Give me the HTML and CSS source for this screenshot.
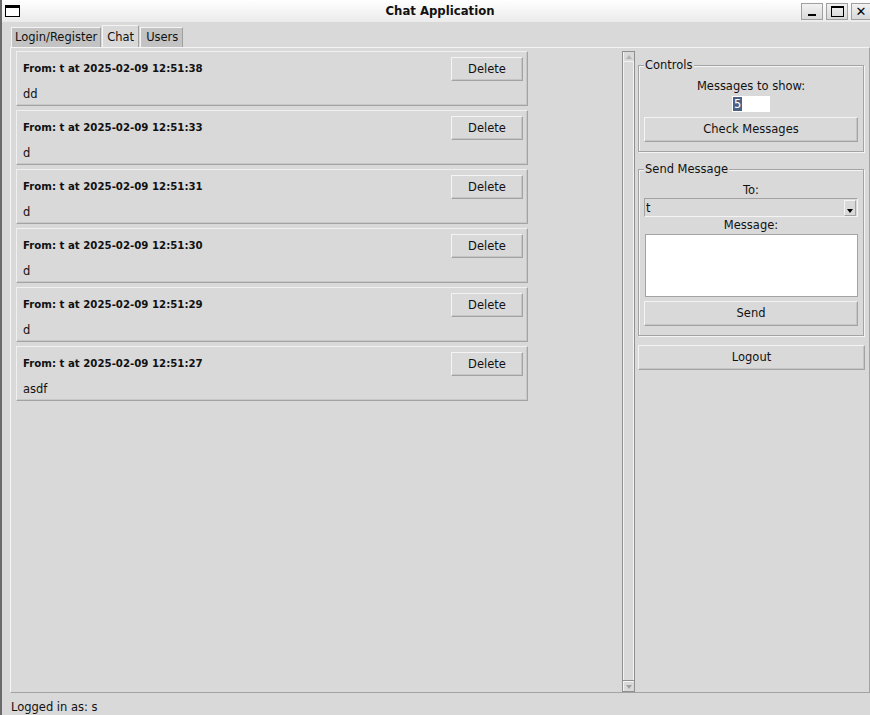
FILE: index.html
```html
<!DOCTYPE html>
<html>
<head>
<meta charset="utf-8">
<link rel="stylesheet" href="styles.css">
</head>
<body>
<div class="window">
  <div class="titlebar">
    <div class="winicon"></div>
    <div class="title">Chat Application</div>
    <div class="wbtns">
      <div class="wbtn"><span class="minbar"></span></div>
      <div class="wbtn"><span class="maxbox"></span></div>
      <div class="wbtn close">✕</div>
    </div>
  </div>
  <div class="tabs">
    <div class="tab">Login/Register</div>
    <div class="tab active">Chat</div>
    <div class="tab">Users</div>
  </div>
  <div class="notebook">
    <div class="canvas">
      <div class="msg"><div class="msg-main"><div class="msg-head">From: t at 2025-02-09 12:51:38</div><div class="msg-body">dd</div></div><div class="btn del">Delete</div></div>
      <div class="msg"><div class="msg-main"><div class="msg-head">From: t at 2025-02-09 12:51:33</div><div class="msg-body">d</div></div><div class="btn del">Delete</div></div>
      <div class="msg"><div class="msg-main"><div class="msg-head">From: t at 2025-02-09 12:51:31</div><div class="msg-body">d</div></div><div class="btn del">Delete</div></div>
      <div class="msg"><div class="msg-main"><div class="msg-head">From: t at 2025-02-09 12:51:30</div><div class="msg-body">d</div></div><div class="btn del">Delete</div></div>
      <div class="msg"><div class="msg-main"><div class="msg-head">From: t at 2025-02-09 12:51:29</div><div class="msg-body">d</div></div><div class="btn del">Delete</div></div>
      <div class="msg"><div class="msg-main"><div class="msg-head">From: t at 2025-02-09 12:51:27</div><div class="msg-body">asdf</div></div><div class="btn del">Delete</div></div>
    </div>
    <div class="scrollbar">
      <div class="arrow up"></div>
      <div class="trough"></div>
      <div class="arrow down"></div>
    </div>
    <div class="side">
      <div class="lframe controls">
        <div class="legend">Controls</div>
        <div class="lbl">Messages to show:</div>
        <div class="entry"><span class="sel">5</span></div>
        <div class="btn wide">Check Messages</div>
      </div>
      <div class="lframe sendframe">
        <div class="legend">Send Message</div>
        <div class="lbl">To:</div>
        <div class="combo"><span>t</span><span class="combo-arrow"></span></div>
        <div class="lbl">Message:</div>
        <div class="textarea"></div>
        <div class="btn wide">Send</div>
      </div>
      <div class="btn logout">Logout</div>
    </div>
  </div>
  <div class="status">Logged in as: s</div>
</div>
</body>
</html>
```

FILE: styles.css
```css
* { box-sizing: border-box; }
html, body { margin: 0; padding: 0; }
body {
  width: 870px;
  height: 715px;
  overflow: hidden;
  background: #d9d9d9;
  font-family: "DejaVu Sans", sans-serif;
  font-size: 11.5px;
  color: #111;
}
.window {
  height: 715px;
  display: flex;
  flex-direction: column;
  border-left: 2px solid #6a6a6a;
}
.titlebar {
  height: 22px;
  display: flex;
  align-items: center;
  background: linear-gradient(#ffffff, #ebebeb);
  position: relative;
}
.winicon {
  width: 15px;
  height: 12px;
  margin-left: 3px;
  border: 1px solid #000;
  border-top-width: 3px;
  background: #fff;
}
.title {
  position: absolute;
  left: 0;
  right: 0;
  top: 0;
  line-height: 22px;
  text-align: center;
  font-weight: bold;
  font-size: 11.7px;
  padding-left: 8px;
}
.wbtns { display: flex; gap: 3px; margin-left: auto; margin-right: -1px; }
.wbtn {
  width: 22px;
  height: 17px;
  border: 1px solid #a0a0a0;
  background: linear-gradient(#f2f2f2, #d8d8d8);
  display: flex;
  align-items: center;
  justify-content: center;
  font-size: 12px;
  font-weight: bold;
  line-height: 1;
  color: #000;
}
.wbtn.close { width: 20px; font-size: 13px; }
.minbar { width: 8px; height: 2px; background: #000; margin-top: 7px; }
.maxbox { width: 13px; height: 11px; border: 1px solid #000; border-top-width: 2px; }
.tabs {
  display: flex;
  align-items: flex-end;
  height: 25px;
  padding-left: 9px;
}
.tab {
  height: 20px;
  padding: 0 3px;
  line-height: 19px;
  background: #c3c3c3;
  border: 1px solid #a0a0a0;
  border-bottom: none;
  border-top-color: #f4f4f4;
  border-left-color: #f4f4f4;
  margin-right: 1px;
}
.tab:last-child { padding: 0 4px 0 5px; }
.tab.active {
  height: 22px;
  background: #d9d9d9;
  padding: 2px 4px 0 4px;
}
.notebook {
  flex: 1;
  margin-left: 8px;
  display: flex;
  border-top: 1px solid #f4f4f4;
  border-left: 1px solid #f4f4f4;
  border-bottom: 1px solid #a3a3a3;
  border-right: 1px solid #a3a3a3;
  padding: 3px 3px 0 5px;
}
.canvas {
  flex: 1;
  display: flex;
  flex-direction: column;
  gap: 4px;
}
.msg {
  width: 512px;
  height: 55px;
  display: flex;
  justify-content: space-between;
  border: 1px solid #a3a3a3;
  border-top-color: #f0f0f0;
  border-left-color: #f0f0f0;
  box-shadow: inset -1px -1px 0 #c8c8c8;
  padding: 5px 4px 0 6px;
}
.msg-head {
  font-weight: bold;
  font-size: 10.2px;
  line-height: 24px;
}
.msg-body {
  line-height: 26px;
}
.btn {
  border: 1px solid #a3a3a3;
  border-top-color: #f4f4f4;
  border-left-color: #f4f4f4;
  box-shadow: inset -1px -1px 0 #c5c5c5;
  text-align: center;
  line-height: 22px;
  height: 24px;
}
.del { width: 72px; height: 24px; }
.scrollbar {
  width: 13px;
  margin: 0 1px 0 0;
  border: 1px solid #8f8f8f;
  display: flex;
  flex-direction: column;
  background: #d9d9d9;
  box-shadow: inset 1px 0 0 #f4f4f4;
}
.arrow {
  height: 10px;
  position: relative;
}
.arrow.up { border-bottom: 1px solid #f4f4f4; }
.arrow.down { border-top: 1px solid #f4f4f4; box-shadow: 0 -1px 0 #8f8f8f; }
.arrow::after {
  content: "";
  position: absolute;
  left: 3px;
  top: 3px;
  border-left: 3px solid transparent;
  border-right: 3px solid transparent;
}
.arrow.up::after { border-bottom: 4px solid #b4b4b4; }
.arrow.down::after { border-top: 4px solid #a0a0a0; }
.trough { flex: 1; border-right: 1px solid #f4f4f4; }
.side {
  width: 230px;
  display: flex;
  flex-direction: column;
  padding-top: 14px;
  padding-left: 2px;
}
.lframe {
  position: relative;
  border: 1px solid #a3a3a3;
  box-shadow: 1px 1px 0 #f4f4f4, inset 1px 1px 0 #f4f4f4;
  display: flex;
  flex-direction: column;
  align-items: center;
  padding: 12px 5px 5px 5px;
  width: 226px;
}
.legend {
  position: absolute;
  top: -8px;
  left: 5px;
  background: #d9d9d9;
  padding: 0 1px;
  line-height: 14px;
}
.controls { height: 87px; }
.lbl { line-height: 17px; }
.entry {
  width: 40px;
  height: 18px;
  background: #fff;
  border: 1px solid #d9d9d9;
  padding: 0 0 0 1px;
  line-height: 16px;
}
.sel { background: #4a6184; color: #fff; padding: 0 1px; }
.wide { width: 214px; margin-top: 4px; height: 25px; }
.sendframe { margin-top: 17px; height: 167px; padding-top: 12px; }
.combo {
  width: 214px;
  height: 19px;
  border: 1px solid #a3a3a3;
  border-right-color: #f4f4f4;
  border-bottom-color: #f4f4f4;
  display: flex;
  justify-content: space-between;
  align-items: center;
  line-height: 16px;
  padding-left: 1px;
  margin-top: -1px;
}
.combo-arrow {
  width: 12px;
  height: 16px;
  border: 1px solid #f4f4f4;
  border-right-color: #a3a3a3;
  border-bottom-color: #a3a3a3;
  position: relative;
  margin-right: 1px;
}
.combo-arrow::after {
  content: "";
  position: absolute;
  left: 2px;
  top: 8px;
  border-left: 3px solid transparent;
  border-right: 3px solid transparent;
  border-top: 4px solid #000;
}
.textarea {
  width: 213px;
  height: 63px;
  background: #fff;
  border: 1px solid #a3a3a3;
  margin-top: 0;
}
.sendframe .wide { margin-top: 4px; }
.logout { margin-top: 9px; width: 227px; height: 25px; }
.status {
  height: 22px;
  padding-left: 9px;
  line-height: 28px;
}
```
